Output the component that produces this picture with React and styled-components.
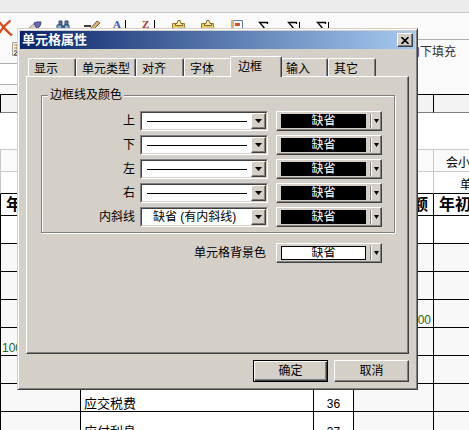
import React, { useState } from 'react'
import styled, { createGlobalStyle, css } from 'styled-components'

const GlobalStyle = createGlobalStyle`
  * {
    box-sizing: border-box;
  }

  body {
    margin: 0;
    background-color: #fff;
    font-family: 'Liberation Sans', 'Noto Sans CJK SC', sans-serif;
    font-size: 12px;
    line-height: 14px;
    color: #000;
  }

  button, input, select {
    margin: 0;
    padding: 0;
    border: none;
    border-radius: 0;
    font: inherit;
    color: inherit;
  }
`

const tabs = ['显示', '单元类型', '对齐', '字体', '边框', '输入', '其它']

const borders = [
  { id: 'top', label: '上' },
  { id: 'bottom', label: '下' },
  { id: 'left', label: '左' },
  { id: 'right', label: '右' },
  { id: 'diagonal', label: '内斜线', text: '缺省 (有内斜线)' }
]

const rows = [
  {},
  {},
  {},
  { end: '00' },
  { start: '100' },
  {},
  { name: '应交税费', line: '36' },
  { name: '应付利息', line: '37' }
]

const DeleteIcon = () => (
  <svg width="16" height="16" viewBox="0 0 16 16">
    <path d="M1 .5C5 5 9 11 15 15.500M13.500.5C9 4 4 10 1 15" fill="none" stroke="#dc4416" strokeWidth="2.200" />
  </svg>
)

const BrushIcon = () => (
  <svg width="16" height="16" viewBox="0 0 16 16">
    <path d="M2 9L9 3l4 4-7 7z" fill="#d9d3c4" stroke="#8a8478" />
    <path d="M8 3l3-1 4 0-1 4-3 3z" fill="#6a6ab4" stroke="#3c3c84" />
  </svg>
)

const FindIcon = () => (
  <svg width="16" height="16" viewBox="0 0 16 16">
    <path d="M4 1h3v4H4zM10 1h3v4h-3z" fill="#5878a8" stroke="#2c4878" />
    <path d="M2 5h5v8H2zM9 5h5v8H9zM7 6h2v3H7z" fill="#8fb0d8" stroke="#2c4878" />
  </svg>
)

const PencilIcon = () => (
  <svg width="16" height="16" viewBox="0 0 16 16">
    <path d="M0 6h7" stroke="#000" strokeWidth="1.5" />
    <path d="M6 9L13 1l3 2-7 7-3 1z" fill="#d8b070" stroke="#80603c" />
  </svg>
)

const SortIcon = ({ letter, color }) => (
  <svg width="16" height="16" viewBox="0 0 16 16">
    <text x="0" y="8" fontFamily="Liberation Serif, serif" fontWeight="bold" fontSize="11" fill={color}>{letter}</text>
    <path d="M12.500 0v13M10 10l2.500 4 2.500-4" fill="none" stroke="#000" />
  </svg>
)

const PasteIcon = () => (
  <svg width="16" height="16" viewBox="0 0 16 16">
    <path d="M1.500 3.500h12v11h-12z" fill="#f0cc60" stroke="#a07828" />
    <path d="M4.500 5.500v-2h1.500l1-3h2l1 3h1.500v2z" fill="#fff4a8" stroke="#806020" />
    <path d="M6 7h9v8H6z" fill="#c8c49c" />
  </svg>
)

const CellIcon = () => (
  <svg width="16" height="16" viewBox="0 0 16 16">
    <path d="M2.500.5h11v13h-11z" fill="#fff" stroke="#5878b8" />
    <path d="M2 0h3v14H2z" fill="#e0b060" />
    <path d="M6 3h5v3H6z" fill="#d85030" />
  </svg>
)

const SumIcon = ({ bar }) => (
  <svg width="16" height="16" viewBox="0 0 16 16">
    <path d="M9.500 4V2.500H1.500L6 7.500l-4.500 5h8V11" fill="none" stroke="#000" strokeWidth="1.300" />
    {bar && <path d="M12.500 2v11" stroke="#000" />}
  </svg>
)

const FillIcon = () => (
  <svg width="16" height="16" viewBox="0 0 16 16">
    <path d="M.5 1.500h14v13H.5z" fill="#f4f0e4" stroke="#a8a090" />
    <path d="M2 4h6M2 7h6M5 3v6" stroke="#c0904c" />
    <path d="M2 10h4l-4 4h4" fill="none" stroke="#444" />
  </svg>
)

const Arrow = ({ width }) => (
  <svg width={width} height="4" viewBox="0 0 7 4" preserveAspectRatio="none">
    <path d="M0 0h7L3.500 4z" fill="#000" />
  </svg>
)

const tools = [
  { name: '删除', icon: <DeleteIcon /> },
  { name: '格式刷', icon: <BrushIcon /> },
  { name: '查找', icon: <FindIcon /> },
  { name: '编辑', icon: <PencilIcon /> },
  { name: '升序', icon: <SortIcon letter="A" color="#3458b0" /> },
  { name: '降序', icon: <SortIcon letter="Z" color="#a83838" /> },
  { name: '粘贴', icon: <PasteIcon /> },
  { name: '选择性粘贴', icon: <PasteIcon /> },
  { name: '单元格', icon: <CellIcon /> },
  { name: '求和', icon: <SumIcon /> },
  { name: '列求和', icon: <SumIcon bar /> },
  { name: '行求和', icon: <SumIcon bar /> }
]

const Sheet = () => (
  <Table>
    <colgroup>
      <col style={{ width: 81 }} />
      <col style={{ width: 233 }} />
      <col style={{ width: 40 }} />
      <col style={{ width: 80 }} />
      <col />
    </colgroup>
    <thead>
      <ColumnRow>
        <th /><th /><th /><th /><th />
      </ColumnRow>
    </thead>
    <tbody>
      <TitleRow>
        <td colSpan="5" />
      </TitleRow>
      <InfoRow>
        <td colSpan="4" />
        <InfoCell $indent="12px">会小</InfoCell>
      </InfoRow>
      <InfoRow $last>
        <td colSpan="4" />
        <InfoCell $indent="26px">单</InfoCell>
      </InfoRow>
      <HeadRow>
        <th>年</th>
        <th />
        <th />
        <th className="end">额</th>
        <th>年初</th>
      </HeadRow>
      {rows.map((row, i) => (
        <DataRow key={i} $plain={i === 0}>
          <td className="amount">{row.start}</td>
          <td className="name">{row.name}</td>
          <td className="line">{row.line}</td>
          <td className="amount end">{row.end}</td>
          <td />
        </DataRow>
      ))}
    </tbody>
  </Table>
)

const ColorPicker = ({ light, label }) => (
  <ColorButton type="button" aria-label={label}>
    <Swatch $light={light}>缺省</Swatch>
    <Divider />
    <Arrow width={5} />
  </ColorButton>
)

const CellDialog = () => {
  const [active, setActive] = useState('边框')

  return (
    <Dialog role="dialog" aria-labelledby="dialog-title">
      <TitleBar>
        <h1 id="dialog-title">单元格属性</h1>
        <CloseButton type="button" aria-label="关闭">
          <svg width="8" height="7" viewBox="0 0 8 7">
            <path d="M.5 0l7 7M7.500 0l-7 7" stroke="#000" strokeWidth="1.600" />
          </svg>
        </CloseButton>
      </TitleBar>
      <Body>
        <TabList role="tablist">
          {tabs.map((tab) => (
            <Tab
              key={tab}
              type="button"
              role="tab"
              aria-selected={tab === active}
              $active={tab === active}
              onClick={() => setActive(tab)}
            >
              {tab}
            </Tab>
          ))}
        </TabList>
        <Panel role="tabpanel">
          <Group>
            <legend>边框线及颜色</legend>
            {borders.map((item) => (
              <Row key={item.id}>
                <RowLabel htmlFor={item.id}>{item.label}</RowLabel>
                <Combo>
                  <Select id={item.id} $line={!item.text}>
                    <option>{item.text || ''}</option>
                  </Select>
                  <ComboArrow>
                    <Arrow width={7} />
                  </ComboArrow>
                </Combo>
                <ColorPicker label={`${item.label} 缺省`} />
              </Row>
            ))}
          </Group>
          <BackgroundRow>
            <span>单元格背景色</span>
            <ColorPicker light label="单元格背景色 缺省" />
          </BackgroundRow>
        </Panel>
        <Footer>
          <PushButton type="button" $primary>确定</PushButton>
          <PushButton type="button">取消</PushButton>
        </Footer>
      </Body>
    </Dialog>
  )
}

const App = () => (
  <Page>
    <GlobalStyle />
    <TopStrip />
    <Toolbar>
      {tools.map((tool) => (
        <ToolButton key={tool.name} type="button" aria-label={tool.name}>
          {tool.icon}
        </ToolButton>
      ))}
    </Toolbar>
    <FormulaArea>
      <div className="left">
        <FillIcon />
        <FormulaInput type="text" aria-label="公式" />
      </div>
      <div className="right">向下填充</div>
    </FormulaArea>
    <Sheet />
    <CellDialog />
  </Page>
)

const face = '#d4d0c8'

const raised = css`
  background-color: ${face};
  border: 1px solid;
  border-color: #fff #404040 #404040 #fff;
  box-shadow: inset -1px -1px 0 #808080;
`

const Page = styled.div`
  position: relative;
  height: 100vh;
  overflow: hidden;
  background-color: #fafafa;
`

const TopStrip = styled.div`
  height: 13px;
  background-color: #ececec;
  border-bottom: 1px solid #c8c8c8;
`

const Toolbar = styled.div`
  display: flex;
  gap: 13px;
  height: 26px;
  margin-left: -3px;
  padding-top: 7px;
`

const ToolButton = styled.button`
  flex: none;
  width: 16px;
  height: 16px;
  background-color: transparent;

  svg {
    display: block;
  }
`

const FormulaArea = styled.div`
  display: flex;
  height: 55px;

  .left {
    flex: 1;
    display: flex;
    flex-direction: column;
    gap: 6px;
    padding-top: 2px;

    svg {
      margin-left: 12px;
    }
  }

  .right {
    width: 69px;
    padding: 5px 0 0 8px;
    border-top: 1px solid #b0b0b0;
    color: #333;
    white-space: nowrap;
  }
`

const FormulaInput = styled.input`
  width: 100%;
  height: 22px;
  background-color: #fff;
  border-top: 1px solid #b0b0b0;
  border-bottom: 1px solid #b0b0b0;
`

const Table = styled.table`
  width: 100%;
  table-layout: fixed;
  border-collapse: separate;
  border-spacing: 0;
  font-size: 13px;

  td, th {
    padding: 0;
    overflow: hidden;
    white-space: nowrap;
    text-align: left;
    border-right: 1px solid #000;
    border-bottom: 1px solid #000;
  }

  tr > :first-child {
    border-left: 1px solid #000;
  }

  tr > :last-child {
    border-right: none;
  }
`

const ColumnRow = styled.tr`
  height: 19px;
  background-color: #f3f3f3;

  && th {
    border-top: 1px solid #000;
    border-bottom-color: #808080;
  }
`

const TitleRow = styled.tr`
  height: 37px;
  background-color: #fff;

  && td {
    border-left: none;
    border-bottom-color: #c8c8c8;
  }
`

const InfoRow = styled.tr`
  height: 22px;
  background-color: ${(props) => (props.$last ? '#fff' : '#fafafa')};

  && td {
    border-color: #c8c8c8;
    border-bottom-color: ${(props) => (props.$last ? '#000' : '#c8c8c8')};
  }
`

const InfoCell = styled.td`
  && {
    padding: 4px 0 0 ${(props) => props.$indent};
    font-size: 12px;
  }
`

const HeadRow = styled.tr`
  height: 22px;
  background-color: #fff;

  && th {
    padding: 0 5px;
    font-size: 16px;
    line-height: 20px;
    text-overflow: clip;
  }

  && .end {
    text-align: right;
  }
`

const DataRow = styled.tr`
  height: 28px;
  background-color: ${(props) => (props.$plain ? '#fff' : '#f8f8f8')};

  td {
    vertical-align: bottom;
  }

  .name, .line {
    background-color: #fff;
  }

  && .name {
    padding-left: 3px;
  }

  && .line {
    text-align: center;
    font-size: 12px;
  }

  && .amount {
    padding: 0 2px 0 1px;
    font-size: 12px;
    color: #1c6420;
  }

  && .end {
    text-align: right;
  }
`

const Dialog = styled.div`
  position: absolute;
  top: 28px;
  left: 17px;
  right: 51px;
  padding: 2px;
  background-color: ${face};
  border: 1px solid;
  border-color: ${face} #404040 #404040 ${face};
  box-shadow: inset 1px 1px 0 #fff, inset -1px -1px 0 #808080;
`

const TitleBar = styled.div`
  display: flex;
  align-items: center;
  justify-content: space-between;
  height: 18px;
  padding: 0 2px;
  background: linear-gradient(to right, #0a246a, #a6caf0);

  h1 {
    margin: 0;
    font-size: 13px;
    line-height: 18px;
    color: #fff;
  }
`

const CloseButton = styled.button`
  ${raised}
  display: flex;
  align-items: center;
  justify-content: center;
  width: 16px;
  height: 14px;
`

const Body = styled.div`
  padding: 7px 6px 5px;
`

const TabList = styled.div`
  display: flex;
  align-items: flex-end;
  height: 20px;
  padding-left: 2px;
`

const Tab = styled.button`
  height: 18px;
  padding: 2px 17px 0 5px;
  text-align: left;
  white-space: nowrap;
  background-color: ${face};
  border: 1px solid;
  border-color: #fff #404040 transparent #fff;
  border-bottom: none;
  border-radius: 2px 2px 0 0;
  box-shadow: inset -1px 0 0 #808080;

  &:nth-child(2) {
    padding-right: 5px;
  }

  ${(props) =>
    props.$active &&
    css`
      position: relative;
      height: 21px;
      margin: 0 -2px -1px;
      padding: 0 19px 0 7px;
    `}
`

const Panel = styled.div`
  min-height: 278px;
  padding: 11px 13px 11px 14px;
  border: 1px solid;
  border-color: #fff #404040 #404040 #fff;
  box-shadow: inset -1px -1px 0 #808080;
`

const Group = styled.fieldset`
  display: flex;
  flex-direction: column;
  gap: 4px;
  margin: 0;
  padding: 9px 12px 5px 0;
  border: 1px solid #808080;
  box-shadow: 1px 1px 0 #fff, inset 1px 1px 0 #fff;

  legend {
    margin-left: 6px;
    padding: 0 2px;
    background-color: ${face};
  }
`

const Row = styled.div`
  display: flex;
  align-items: center;
  height: 20px;
`

const RowLabel = styled.label`
  flex: 1;
  padding-right: 5px;
  text-align: right;
`

const BackgroundRow = styled(Row)`
  justify-content: flex-end;
  gap: 10px;
  margin-top: 10px;
  padding-right: 13px;
`

const Combo = styled.div`
  display: grid;
  width: 128px;
  height: 20px;
  margin-right: 8px;
  border: 1px solid;
  border-color: #808080 #fff #fff #808080;

  > * {
    grid-area: 1 / 1;
  }
`

const Select = styled.select`
  appearance: none;
  width: 100%;
  height: 18px;
  padding-left: 11px;
  background-color: #fff;
  border: 1px solid;
  border-color: #404040 ${face} ${face} #404040;
  outline: none;

  ${(props) =>
    props.$line &&
    css`
      background-image: linear-gradient(#000, #000);
      background-position: 5px 8px;
      background-size: calc(100% - 24px) 1px;
      background-repeat: no-repeat;
    `}
`

const ComboArrow = styled.span`
  ${raised}
  display: flex;
  align-items: center;
  justify-content: center;
  justify-self: end;
  width: 15px;
  height: 16px;
  margin: 1px;
  pointer-events: none;
`

const ColorButton = styled.button`
  ${raised}
  display: flex;
  align-items: center;
  width: 106px;
  height: 20px;
  padding: 0 2px 0 4px;
`

const Swatch = styled.span`
  flex: 1;
  height: 14px;
  line-height: 12px;
  text-align: center;
  border: 1px solid #000;
  background-color: ${(props) => (props.$light ? '#fff' : '#000')};
  color: ${(props) => (props.$light ? '#000' : '#fff')};
`

const Divider = styled.span`
  width: 2px;
  height: 14px;
  margin: 0 2px 0 4px;
  border-left: 1px solid #808080;
  border-right: 1px solid #fff;
`

const Footer = styled.div`
  display: flex;
  justify-content: flex-end;
  gap: 6px;
  margin-top: 6px;
`

const PushButton = styled.button`
  ${raised}
  width: 75px;
  height: 22px;

  ${(props) =>
    props.$primary &&
    css`
      border-color: #000;
      box-shadow: inset 1px 1px 0 #fff, inset -1px -1px 0 #404040, inset -2px -2px 0 #808080;
    `}
`

export default App
